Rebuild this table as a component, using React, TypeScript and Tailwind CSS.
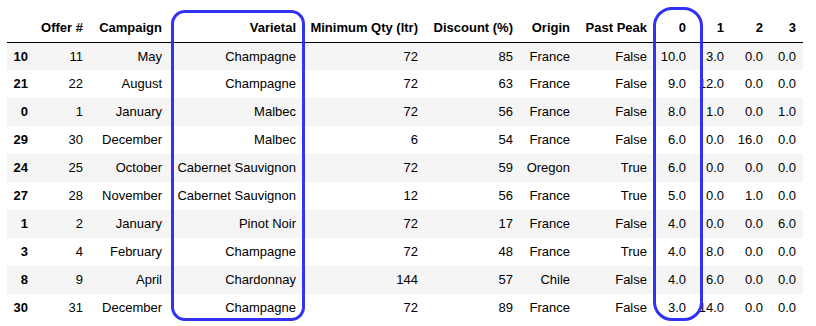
import React from "react";

type Row = [string, string, string, string, string, string, string, string, string, string, string, string];

const headers = [
  "",
  "Offer #",
  "Campaign",
  "Varietal",
  "Minimum Qty (ltr)",
  "Discount (%)",
  "Origin",
  "Past Peak",
  "0",
  "1",
  "2",
  "3",
];

const widths = [
  "w-[27.5px]",
  "w-[55px]",
  "w-[79px]",
  "w-[134px]",
  "w-[122px]",
  "w-[95px]",
  "w-[57px]",
  "w-[77px]",
  "w-[39px]",
  "w-[38px]",
  "w-[39px]",
  "w-[33px]",
];

const rows: Row[] = [
  ["10", "11", "May", "Champagne", "72", "85", "France", "False", "10.0", "3.0", "0.0", "0.0"],
  ["21", "22", "August", "Champagne", "72", "63", "France", "False", "9.0", "12.0", "0.0", "0.0"],
  ["0", "1", "January", "Malbec", "72", "56", "France", "False", "8.0", "1.0", "0.0", "1.0"],
  ["29", "30", "December", "Malbec", "6", "54", "France", "False", "6.0", "0.0", "16.0", "0.0"],
  ["24", "25", "October", "Cabernet Sauvignon", "72", "59", "Oregon", "True", "6.0", "0.0", "0.0", "0.0"],
  ["27", "28", "November", "Cabernet Sauvignon", "12", "56", "France", "True", "5.0", "0.0", "1.0", "0.0"],
  ["1", "2", "January", "Pinot Noir", "72", "17", "France", "False", "4.0", "0.0", "0.0", "6.0"],
  ["3", "4", "February", "Champagne", "72", "48", "France", "True", "4.0", "8.0", "0.0", "0.0"],
  ["8", "9", "April", "Chardonnay", "144", "57", "Chile", "False", "4.0", "6.0", "0.0", "0.0"],
  ["30", "31", "December", "Champagne", "72", "89", "France", "False", "3.0", "14.0", "0.0", "0.0"],
];

export default function App() {
  return (
    <div className="relative h-[326px] w-[816px] overflow-hidden bg-white pl-[7px] pt-[14px] font-['Liberation_Sans',Arial,sans-serif] text-[13px] text-black">
      <table className="w-[795.5px] table-fixed border-collapse">
        <colgroup>
          {widths.map((w, i) => (
            <col key={i} className={w} />
          ))}
        </colgroup>
        <thead>
          <tr className="h-[28px] border-b border-black">
            {headers.map((h, i) => (
              <th key={i} className="whitespace-nowrap pl-0 pr-[6.5px] text-right align-middle font-bold">
                {h}
              </th>
            ))}
          </tr>
        </thead>
        <tbody>
          {rows.map((r, ri) => (
            <tr key={ri} className={ri % 2 === 0 ? "h-[28px] bg-[#f5f5f5]" : "h-[28px] bg-white"}>
              {r.map((c, ci) =>
                ci === 0 ? (
                  <th key={ci} className="pl-0 pr-[6.5px] text-right align-middle font-bold">
                    {c}
                  </th>
                ) : (
                  <td key={ci} className="whitespace-nowrap pl-0 pr-[6.5px] text-right align-middle">
                    {c}
                  </td>
                )
              )}
            </tr>
          ))}
        </tbody>
      </table>

      {/* highlight boxes drawn over the table */}
      <div className="pointer-events-none absolute left-[171px] top-[10px] h-[311px] w-[134px] rounded-[14px] border-[3px] border-[#3232f4]" />
      <div className="pointer-events-none absolute left-[653px] top-[7px] h-[314px] w-[50px] rounded-[19px] border-[3px] border-[#3232f4]" />
    </div>
  );
}
